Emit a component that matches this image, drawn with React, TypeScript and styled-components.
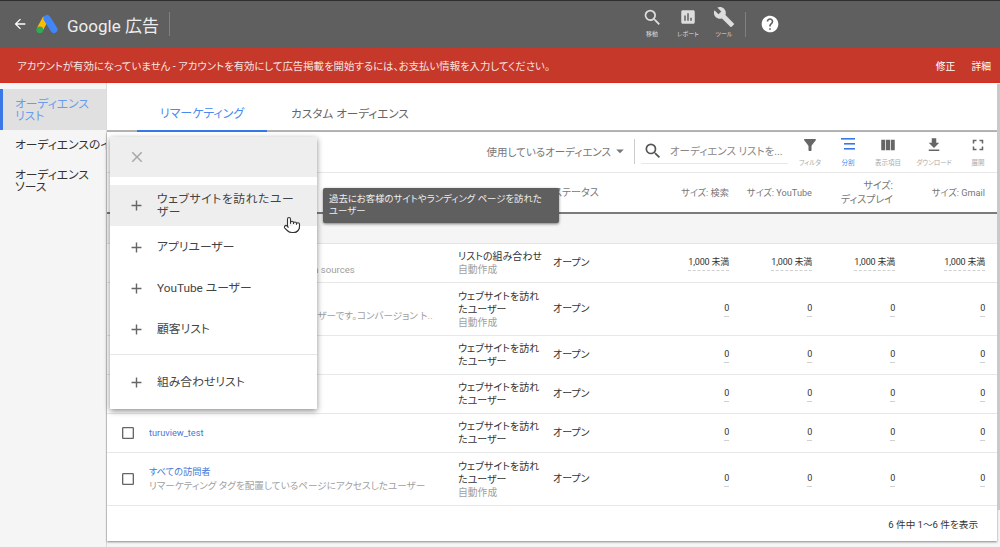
import React from "react";
import styled, { createGlobalStyle } from "styled-components";
import {
  MdArrowBack,
  MdSearch,
  MdAssessment,
  MdBuild,
  MdHelp,
  MdClose,
  MdAdd,
  MdArrowDropDown,
  MdFilterAlt,
  MdViewColumn,
  MdFileDownload,
  MdFullscreen,
  MdCheckBoxOutlineBlank,
} from "react-icons/md";
import { Pointer } from "lucide-react";

const GlobalStyles = createGlobalStyle`
  * {
    margin: 0;
    padding: 0;
    box-sizing: border-box;
  }
  body {
    font-family: Roboto, "Noto Sans CJK JP", sans-serif;
    font-feature-settings: "palt";
    background: #fff;
  }
`;

const Page = styled.div`
  position: relative;
  width: 1000px;
  height: 547px;
  overflow: hidden;
  display: flex;
  flex-direction: column;
`;

const TopBar = styled.header`
  height: 48px;
  flex: none;
  display: flex;
  align-items: center;
  background: #5f5f5f;
  border-top: 1px solid #2e2e2e;
  color: #fff;
  padding-left: 12px;
  padding-bottom: 1px;
`;

const Brand = styled.div`
  display: flex;
  align-items: center;
  width: 134px;
  height: 24px;
  margin-left: 8px;
  border-right: 1px solid #808080;
  font-size: 17px;
  gap: 9px;
  color: #eeeeee;
  white-space: nowrap;
`;

const TopActions = styled.nav`
  display: flex;
  align-self: flex-start;
  padding-top: 5px;
  margin-left: 464px;
  width: 108px;
`;

const TopAction = styled.div`
  width: 36px;
  display: flex;
  flex-direction: column;
  align-items: center;
  font-size: 6px;
  line-height: 8px;
  color: #dddddd;
  white-space: nowrap;
`;

const TopIconSlot = styled.div`
  height: 22px;
  margin-bottom: 2px;
  display: flex;
  align-items: center;
  justify-content: center;
`;

const TopDivider = styled.div`
  width: 1px;
  height: 25px;
  margin-left: 3px;
  background: #808080;
`;

const HelpSlot = styled.div`
  margin-left: 14px;
  display: flex;
`;

const Banner = styled.div`
  height: 35px;
  flex: none;
  display: flex;
  align-items: center;
  justify-content: space-between;
  padding: 0 9px 0 17px;
  background: #c5382a;
  border-bottom: 1px solid #dc2a1a;
  color: #f6e4e0;
  font-size: 10.4px;
`;

const BannerLinks = styled.div`
  display: flex;
  gap: 16px;
  color: #ffffff;
  font-size: 9.8px;
  padding-top: 2px;
`;

const Body = styled.div`
  flex: 1;
  display: flex;
  min-height: 0;
`;

const Sidebar = styled.aside`
  width: 107px;
  flex: none;
  padding-top: 6px;
  background: #f5f5f5;
  border-right: 1px solid #dcdcdc;
  overflow: hidden;
`;

const SideItem = styled.div<{ $active?: boolean; $h: number }>`
  height: ${(p) => p.$h}px;
  display: flex;
  align-items: center;
  padding-left: 12px;
  font-size: 11.8px;
  line-height: 12px;
  border-left: 3px solid ${(p) => (p.$active ? "#3b78e7" : "transparent")};
  background: ${(p) => (p.$active ? "#e0e0e0" : "transparent")};
  color: ${(p) => (p.$active ? "#6a9cec" : "#333333")};
  white-space: nowrap;
`;

const Main = styled.main`
  flex: 1;
  min-width: 0;
  padding-right: 3px;
  display: flex;
  flex-direction: column;
  background: #f5f5f5;
`;

const Tabs = styled.div`
  height: 49px;
  flex: none;
  display: flex;
  padding-left: 30px;
  background: #fff;
  border-bottom: 2px solid #b5b5b5;
`;

const Tab = styled.div<{ $active?: boolean; $w: number }>`
  width: ${(p) => p.$w}px;
  height: 49px;
  padding-top: 12px;
  display: flex;
  align-items: center;
  justify-content: center;
  font-size: ${(p) => (p.$active ? 12 : 11.6)}px;
  color: ${(p) => (p.$active ? "#4d8af0" : "#666666")};
  border-bottom: 2px solid ${(p) => (p.$active ? "#3b78e7" : "transparent")};
`;

const Card = styled.section`
  background: #fff;
  box-shadow: 0 1px 2px rgba(0, 0, 0, 0.45);
`;

const Toolbar = styled.div`
  height: 41px;
  padding-bottom: 2px;
  display: flex;
  align-items: center;
  justify-content: flex-end;
  border-bottom: 1px solid #e8e8e8;
`;

const UsedFilter = styled.div`
  display: flex;
  align-items: center;
  font-size: 10.5px;
  color: #777777;
  height: 25px;
  padding-right: 5px;
  border-right: 1px solid #cccccc;
  margin-right: 6px;
`;

const SearchBox = styled.div`
  width: 147px;
  height: 26px;
  margin-right: 3px;
  padding-left: 2px;
  display: flex;
  align-items: center;
  gap: 7px;
  font-size: 10.5px;
  color: #888888;
  border-bottom: 1px solid #e8e8e8;
  white-space: nowrap;
`;

const ToolSet = styled.div`
  display: flex;
`;

const Tool = styled.div<{ $w: number; $active?: boolean }>`
  width: ${(p) => p.$w}px;
  height: 31px;
  display: flex;
  flex-direction: column;
  align-items: center;
  justify-content: space-between;
  font-size: 6.5px;
  line-height: 8px;
  color: ${(p) => (p.$active ? "#4d8af0" : "#aaaaaa")};
  white-space: nowrap;

  svg {
    color: ${(p) => (p.$active ? "#3b78e7" : "#666666")};
  }
`;

const columns = "42px 309px 95px 97px 79px 83px 83px 90px";

const HeaderRow = styled.div`
  height: 41px;
  display: grid;
  grid-template-columns: ${columns};
  align-items: center;
  font-size: 10px;
  line-height: 14px;
  color: #777777;
  border-bottom: 2px solid #7b7b7b;
`;

// these two labels sit right under the tooltip
const CoveredHeader = styled.div`
  padding-top: 4px;
`;

const HeaderSize = styled.div`
  font-size: 9.2px;
  text-align: right;
  white-space: nowrap;
`;

const WrappedHeader = styled(HeaderSize)`
  font-size: 10px;
  padding-right: 2px;
  white-space: normal;
`;

const TotalRow = styled.div`
  height: 30px;
  background: #f5f5f5;
  border-bottom: 1px solid #e4e4e4;
`;

const Row = styled.div<{ $h: number }>`
  height: ${(p) => p.$h}px;
  display: grid;
  grid-template-columns: ${columns};
  align-items: center;
  border-bottom: 1px solid #e8e8e8;
  font-size: 10px;
  color: #333333;
`;

const CheckCell = styled.div`
  display: flex;
  justify-content: center;
  padding-right: 1px;
  color: #666666;
`;

const NameCell = styled.div`
  min-width: 0;
  line-height: 14px;
`;

const NameLink = styled.div`
  color: #4a78d8;
  font-size: 9.2px;
`;

const SubText = styled.div`
  color: #a0a0a0;
  font-size: 9.6px;
  white-space: nowrap;
  overflow: hidden;
`;

const TypeCell = styled.div`
  width: 86px;
  line-height: 13px;
`;

const AutoText = styled.div`
  color: #a0a0a0;
  font-size: 9.8px;
`;

const StatusCell = styled.div`
  padding-bottom: 3px;
  white-space: nowrap;
`;

const SizeCell = styled.div`
  text-align: right;
  white-space: nowrap;
  font-size: 9px;
  letter-spacing: -0.2px;
`;

const Dotted = styled.span`
  display: inline-block;
  padding-bottom: 2px;
  border-bottom: 1px dashed #d0d0d0;
  line-height: 12px;
`;

const FooterRow = styled.div`
  height: 35px;
  display: flex;
  align-items: center;
  justify-content: flex-end;
  padding-right: 19px;
  font-size: 9.6px;
  color: #333333;
`;

const Scrollbar = styled.div`
  position: absolute;
  top: 84px;
  right: 0;
  width: 3px;
  height: 426px;
  background: #c9c9c9;
`;

const Popup = styled.div`
  position: absolute;
  left: 110px;
  top: 137px;
  width: 207px;
  height: 272px;
  background: #fff;
  box-shadow: 0 2px 6px rgba(0, 0, 0, 0.45);
  color: #444444;
`;

const PopupHead = styled.div`
  height: 40px;
  display: flex;
  align-items: center;
  padding-left: 18px;
  margin-bottom: 8px;
  background: #eeeeee;
  color: #a8a8a8;
`;

const PopupItem = styled.div<{ $hover?: boolean; $h: number }>`
  height: ${(p) => p.$h}px;
  display: flex;
  align-items: center;
  gap: 12px;
  padding-left: 18px;
  padding-top: ${(p) => (p.$hover ? 0 : 2)}px;
  font-size: 11.8px;
  line-height: 13px;
  letter-spacing: ${(p) => (p.$hover ? 0.6 : 0)}px;
  background: ${(p) => (p.$hover ? "#eeeeee" : "transparent")};

  svg {
    flex: none;
    color: #666666;
  }

  span {
    max-width: 138px;
  }
`;

const PopupDivider = styled.div`
  height: 1px;
  margin-top: 5px;
  background: #e8e8e8;
`;

const Tooltip = styled.div`
  position: absolute;
  left: 323px;
  top: 188px;
  width: 236px;
  height: 35px;
  padding: 5px 14px 5px 6px;
  border-radius: 2px;
  background: #5f5f5f;
  box-shadow: 0 1px 3px rgba(0, 0, 0, 0.5);
  color: #eeeeee;
  font-size: 9.4px;
  line-height: 12px;
`;

const HandCursor = styled(Pointer)`
  position: absolute;
  left: 283px;
  top: 216px;
  color: #333333;
  fill: #ffffff;
`;

const GoogleAdsLogo = () => (
  <svg width="22" height="20" viewBox="0 0 22 20">
    <line x1="10" y1="4" x2="4" y2="15" stroke="#fbbc04" strokeWidth="6.5" />
    <line x1="11" y1="4.5" x2="18" y2="15.5" stroke="#4285f4" strokeWidth="7" strokeLinecap="round" />
    <circle cx="3.8" cy="15.8" r="3.4" fill="#34a853" />
  </svg>
);

const SegmentIcon = () => (
  <svg width="16" height="16" viewBox="0 0 16 16" fill="#3b78e7">
    <rect x="1" y="2" width="14" height="1.6" />
    <rect x="4" y="7" width="11" height="1.6" />
    <rect x="4" y="12" width="11" height="1.6" />
  </svg>
);

type RowData = {
  h: number;
  name?: string;
  sub?: string;
  type: string;
  auto?: boolean;
  size: string;
};

const siteUsers = "ウェブサイトを訪れたユーザー";

const rows: RowData[] = [
  {
    h: 39,
    name: "AdWords オプティマイズド リスト",
    sub: "A combined audience built from all data sources",
    type: "リストの組み合わせ",
    auto: true,
    size: "1,000 未満",
  },
  {
    h: 53,
    name: "すべてのコンバージョン ユーザー",
    sub: "コンバージョン トラッキングでの該当ユーザーです。コンバージョン ト..",
    type: siteUsers,
    auto: true,
    size: "0",
  },
  { h: 39, name: "test_list", type: siteUsers, size: "0" },
  { h: 39, name: "test_list_2", type: siteUsers, size: "0" },
  { h: 39, name: "turuview_test", type: siteUsers, size: "0" },
  {
    h: 53,
    name: "すべての訪問者",
    sub: "リマーケティング タグを配置しているページにアクセスしたユーザー",
    type: siteUsers,
    auto: true,
    size: "0",
  },
];

const App = () => {
  return (
    <>
      <GlobalStyles />
      <Page>
        <TopBar>
          <MdArrowBack size={16} />
          <Brand>
            <GoogleAdsLogo />
            <span>Google 広告</span>
          </Brand>
          <TopActions>
            <TopAction>
              <TopIconSlot>
                <MdSearch size={21} />
              </TopIconSlot>
              移動
            </TopAction>
            <TopAction>
              <TopIconSlot>
                <MdAssessment size={18} />
              </TopIconSlot>
              レポート
            </TopAction>
            <TopAction>
              <TopIconSlot>
                <MdBuild size={22} />
              </TopIconSlot>
              ツール
            </TopAction>
          </TopActions>
          <TopDivider />
          <HelpSlot>
            <MdHelp size={20} />
          </HelpSlot>
        </TopBar>
        <Banner>
          <span>
            アカウントが有効になっていません - アカウントを有効にして広告掲載を開始するには、お支払い情報を入力してください。
          </span>
          <BannerLinks>
            <span>修正</span>
            <span>詳細</span>
          </BannerLinks>
        </Banner>
        <Body>
          <Sidebar>
            <SideItem $active $h={41}>
              オーディエンス
              <br />
              リスト
            </SideItem>
            <SideItem $h={30}>オーディエンスのインサイト</SideItem>
            <SideItem $h={42}>
              オーディエンス
              <br />
              ソース
            </SideItem>
          </Sidebar>
          <Main>
            <Tabs>
              <Tab $active $w={130}>
                リマーケティング
              </Tab>
              <Tab $w={166}>カスタム オーディエンス</Tab>
            </Tabs>
            <Card>
              <Toolbar>
                <UsedFilter>
                  使用しているオーディエンス
                  <MdArrowDropDown size={18} />
                </UsedFilter>
                <SearchBox>
                  <MdSearch size={20} color="#555555" />
                  オーディエンス リストを...
                </SearchBox>
                <ToolSet>
                  <Tool $w={38}>
                    <MdFilterAlt size={18} />
                    フィルタ
                  </Tool>
                  <Tool $w={38} $active>
                    <SegmentIcon />
                    分割
                  </Tool>
                  <Tool $w={42}>
                    <MdViewColumn size={18} />
                    表示項目
                  </Tool>
                  <Tool $w={50}>
                    <MdFileDownload size={18} />
                    ダウンロード
                  </Tool>
                  <Tool $w={38}>
                    <MdFullscreen size={18} />
                    展開
                  </Tool>
                </ToolSet>
              </Toolbar>
              <HeaderRow>
                <div />
                <CoveredHeader>オーディエンス リスト名</CoveredHeader>
                <CoveredHeader>タイプ</CoveredHeader>
                <div>ステータス</div>
                <HeaderSize>サイズ: 検索</HeaderSize>
                <HeaderSize>サイズ: YouTube</HeaderSize>
                <WrappedHeader>
                  サイズ:
                  <br />
                  ディスプレイ
                </WrappedHeader>
                <HeaderSize>サイズ: Gmail</HeaderSize>
              </HeaderRow>
              <TotalRow />
              {rows.map((row) => (
                <Row key={row.name} $h={row.h}>
                  <CheckCell>
                    <MdCheckBoxOutlineBlank size={16} />
                  </CheckCell>
                  <NameCell>
                    <NameLink>{row.name}</NameLink>
                    {row.sub && <SubText>{row.sub}</SubText>}
                  </NameCell>
                  <TypeCell>
                    {row.type}
                    {row.auto && <AutoText>自動作成</AutoText>}
                  </TypeCell>
                  <StatusCell>オープン</StatusCell>
                  {[0, 1, 2, 3].map((i) => (
                    <SizeCell key={i}>
                      <Dotted>{row.size}</Dotted>
                    </SizeCell>
                  ))}
                </Row>
              ))}
              <FooterRow>6 件中 1～6 件を表示</FooterRow>
            </Card>
          </Main>
        </Body>
        <Scrollbar />
        <Popup>
          <PopupHead>
            <MdClose size={18} />
          </PopupHead>
          <PopupItem $hover $h={41}>
            <MdAdd size={17} />
            <span>ウェブサイトを訪れたユーザー</span>
          </PopupItem>
          <PopupItem $h={41}>
            <MdAdd size={17} />
            <span>アプリユーザー</span>
          </PopupItem>
          <PopupItem $h={41}>
            <MdAdd size={17} />
            <span>YouTube ユーザー</span>
          </PopupItem>
          <PopupItem $h={41}>
            <MdAdd size={17} />
            <span>顧客リスト</span>
          </PopupItem>
          <PopupDivider />
          <PopupItem $h={53}>
            <MdAdd size={17} />
            <span>組み合わせリスト</span>
          </PopupItem>
        </Popup>
        <Tooltip>過去にお客様のサイトやランディング ページを訪れたユーザー</Tooltip>
        <HandCursor size={18} strokeWidth={1.5} />
      </Page>
    </>
  );
};

export default App;
